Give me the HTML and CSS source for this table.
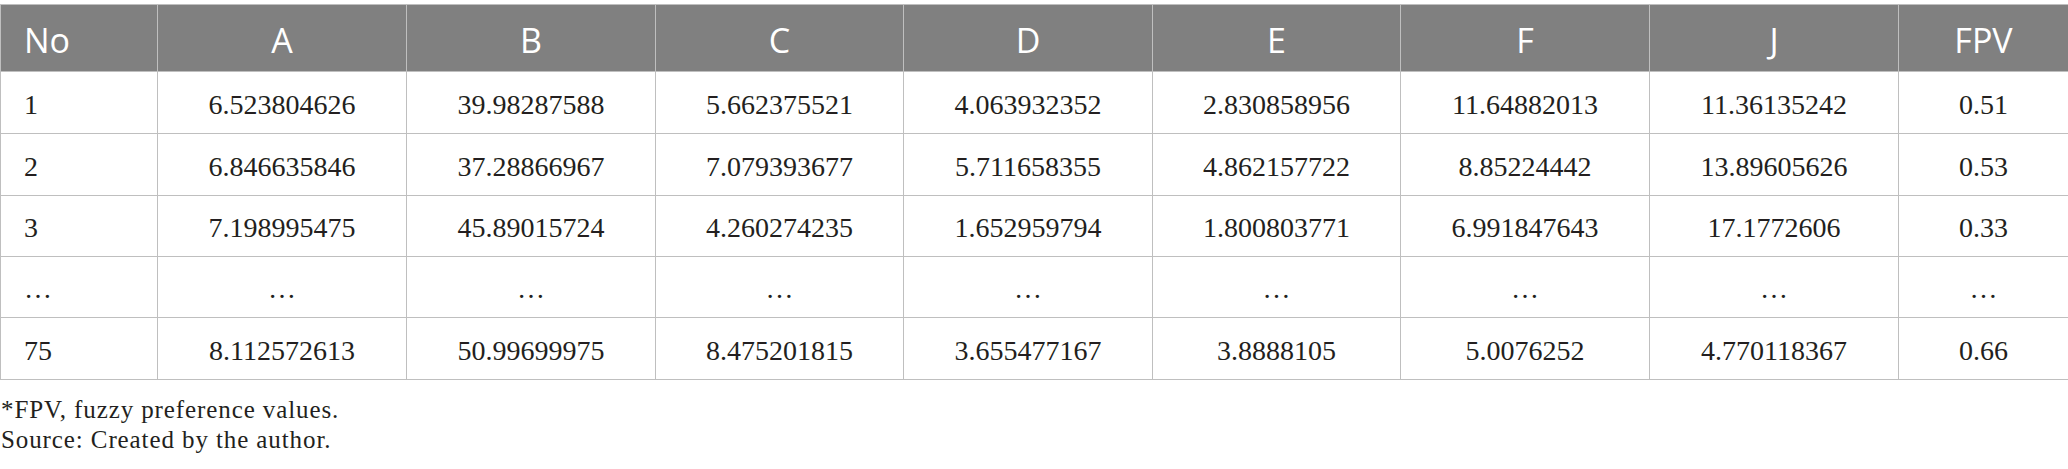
FILE: index.html
```html
<!DOCTYPE html>
<html lang="en">
<head>
<meta charset="utf-8">
<title>FPV table</title>
<link rel="stylesheet" href="styles.css">
</head>
<body>
<div class="page">
  <table class="data">
    <colgroup>
      <col class="c-no">
      <col class="c-a"><col class="c-b"><col class="c-c"><col class="c-d">
      <col class="c-e"><col class="c-f"><col class="c-j">
      <col class="c-fpv">
    </colgroup>
    <thead>
      <tr>
        <th class="first">No</th><th>A</th><th>B</th><th>C</th><th>D</th><th>E</th><th>F</th><th>J</th><th>FPV</th>
      </tr>
    </thead>
    <tbody>
      <tr class="r62"><td class="first">1</td><td>6.523804626</td><td>39.98287588</td><td>5.662375521</td><td>4.063932352</td><td>2.830858956</td><td>11.64882013</td><td>11.36135242</td><td>0.51</td></tr>
      <tr class="r62"><td class="first">2</td><td>6.846635846</td><td>37.28866967</td><td>7.079393677</td><td>5.711658355</td><td>4.862157722</td><td>8.85224442</td><td>13.89605626</td><td>0.53</td></tr>
      <tr class="r61"><td class="first">3</td><td>7.198995475</td><td>45.89015724</td><td>4.260274235</td><td>1.652959794</td><td>1.800803771</td><td>6.991847643</td><td>17.1772606</td><td>0.33</td></tr>
      <tr class="r61"><td class="first">…</td><td>…</td><td>…</td><td>…</td><td>…</td><td>…</td><td>…</td><td>…</td><td>…</td></tr>
      <tr class="r62"><td class="first">75</td><td>8.112572613</td><td>50.99699975</td><td>8.475201815</td><td>3.655477167</td><td>3.8888105</td><td>5.0076252</td><td>4.770118367</td><td>0.66</td></tr>
    </tbody>
  </table>
  <div class="notes">
    <p>*FPV, fuzzy preference values.</p>
    <p>Source: Created by the author.</p>
  </div>
</div>
</body>
</html>
```

FILE: styles.css
```css
html, body {
  margin: 0;
  padding: 0;
  background: #ffffff;
}

.page {
  width: 2068px;
  padding-top: 4px;
}

.data {
  width: 2068px;
  table-layout: fixed;
  border-collapse: collapse;
  border: 1px solid #bfbfbf;
}

.c-no { width: 157px; }
.c-a, .c-b, .c-d, .c-f, .c-j { width: 249px; }
.c-c, .c-e { width: 248px; }
.c-fpv { width: 170px; }

.data th,
.data td {
  border: 1px solid #bfbfbf;
  padding: 0;
  text-align: center;
  vertical-align: middle;
  white-space: nowrap;
}

.data th {
  background: #808080;
  color: #ffffff;
  font-family: "Open Sans", "Noto Sans", sans-serif;
  font-weight: 400;
  font-size: 34px;
  height: 67px;
  line-height: 1;
  padding-top: 4px;
  box-sizing: border-box;
}

.data td {
  font-family: "Liberation Serif", "Times New Roman", serif;
  font-size: 28px;
  color: #231f20;
  line-height: 1;
  box-sizing: border-box;
}

.r62 td { height: 62px; padding-top: 4px; }
.r61 td { height: 61px; padding-top: 4px; }

.data .first {
  text-align: left;
  padding-left: 23px;
}

.notes {
  margin-top: 15px;
  font-family: "Liberation Serif", "Times New Roman", serif;
  font-size: 25px;
  letter-spacing: 0.9px;
  color: #231f20;
}

.notes p {
  margin: 0;
  line-height: 30px;
  padding-left: 1px;
}
```
